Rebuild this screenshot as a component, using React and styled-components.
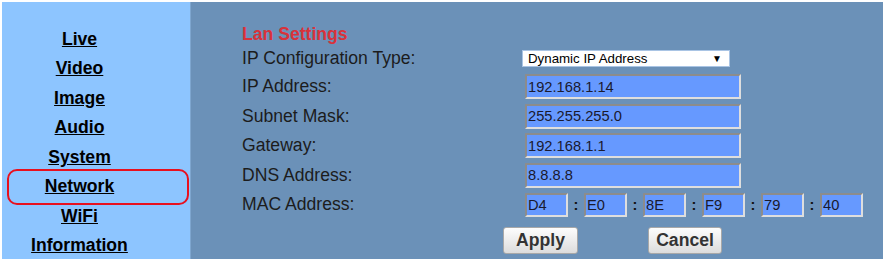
import React from 'react';
import styled, { createGlobalStyle } from 'styled-components';

const GlobalStyle = createGlobalStyle`
  html, body {
    margin: 0;
    padding: 0;
    background: #fff;
  }
  body {
    font-family: "Liberation Sans", Arial, sans-serif;
  }
`;

const Frame = styled.div`
  display: flex;
  margin: 2px 0 0 2px;
  width: 881px;
  height: 257px;
`;

const Sidebar = styled.nav`
  width: 189px;
  box-sizing: border-box;
  padding-top: 23px;
  background: #8dc5ff;
  border-right: 1px solid #7ea6cf;
`;

const NavList = styled.ul`
  list-style: none;
  margin: 0;
  padding: 0;
  width: 155px;
`;

const NavItem = styled.li`
  position: relative;
  height: 29.45px;
  line-height: 29.45px;
  text-align: center;
  font-size: 17.6px;
  font-weight: bold;

  a {
    color: #000;
    text-decoration: underline;
  }

  ${p => p.$marked && `
    &::after {
      content: '';
      position: absolute;
      top: -3px;
      bottom: -3px;
      left: 5px;
      width: 182px;
      box-sizing: border-box;
      border: 2px solid #e8101e;
      border-radius: 10px;
    }
  `}
`;

const Main = styled.main`
  flex: 1;
  padding: 22px 0 0 51px;
  background: #6b91b8;
`;

const Title = styled.h2`
  margin: 0 0 4px;
  height: 20px;
  line-height: 20px;
  font-size: 17.6px;
  font-weight: bold;
  color: #d9323a;
`;

const Row = styled.div`
  display: grid;
  grid-template-columns: 280px auto;
  align-items: center;
  height: ${p => p.$h}px;
  margin-bottom: ${p => p.$gap || 0}px;
`;

const Label = styled.span`
  font-size: 17.6px;
  color: #1c1c1c;
`;

const SelectBox = styled.div`
  display: flex;
  align-items: center;
  justify-content: space-between;
  width: 208px;
  height: 17px;
  box-sizing: border-box;
  padding: 0 7px 0 5px;
  background: #fff;
  border: 1px solid #a9c4e4;
  font-size: 13.3px;
  color: #000;
`;

const Arrow = styled.span`
  font-size: 10px;
  color: #000;
`;

const Field = styled.input`
  box-sizing: border-box;
  width: ${p => p.$w || 216}px;
  height: ${p => p.$hh || 25}px;
  margin: 0;
  padding: 0 0 0 1px;
  background: #6699ff;
  border: 2px solid;
  border-color: #8c8c8c #dedede #dedede #8c8c8c;
  font-family: "Liberation Sans", Arial, sans-serif;
  font-size: 14.7px;
  color: #1a1a2e;
  outline: none;
`;

const Control = styled.div`
  display: flex;
  align-items: center;
  margin-left: 3px;
`;

const Colon = styled.span`
  width: 16px;
  text-align: center;
  font-size: 14.7px;
  font-weight: bold;
  color: #111;
`;

const Buttons = styled.div`
  display: flex;
  gap: 70px;
  margin-top: 7.5px;
  padding-left: 261px;
`;

const Button = styled.button`
  width: ${p => p.$w}px;
  height: 27px;
  padding: 0;
  background: linear-gradient(#fdfdfd, #dcdcdc);
  border: 1px solid #a8a8a8;
  border-radius: 3px;
  font-family: "Liberation Sans", Arial, sans-serif;
  font-size: 17.6px;
  font-weight: bold;
  color: #333;
`;

const navItems = ['Live', 'Video', 'Image', 'Audio', 'System', 'Network', 'WiFi', 'Information'];

const fields = [
  ['IP Address:', '192.168.1.14'],
  ['Subnet Mask:', '255.255.255.0'],
  ['Gateway:', '192.168.1.1'],
  ['DNS Address:', '8.8.8.8'],
];

const mac = ['D4', 'E0', '8E', 'F9', '79', '40'];

export default function App() {
  return (
    <>
      <GlobalStyle />
      <Frame>
        <Sidebar>
          <NavList>
            {navItems.map(n => (
              <NavItem key={n} $marked={n === 'Network'}>
                <a href="#">{n}</a>
              </NavItem>
            ))}
          </NavList>
        </Sidebar>
        <Main>
          <Title>Lan Settings</Title>
          <Row $h={20} $gap={4}>
            <Label>IP Configuration Type:</Label>
            <SelectBox>
              <span>Dynamic IP Address</span>
              <Arrow>▼</Arrow>
            </SelectBox>
          </Row>
          {fields.map(([l, v]) => (
            <Row key={l} $h={29.5}>
              <Label>{l}</Label>
              <Control>
                <Field defaultValue={v} />
              </Control>
            </Row>
          ))}
          <Row $h={29.5}>
            <Label>MAC Address:</Label>
            <Control>
              {mac.map((m, i) => (
                <React.Fragment key={i}>
                  {i > 0 && <Colon>:</Colon>}
                  <Field $w={43} $hh={24} defaultValue={m} />
                </React.Fragment>
              ))}
            </Control>
          </Row>
          <Buttons>
            <Button $w={75}>Apply</Button>
            <Button $w={74}>Cancel</Button>
          </Buttons>
        </Main>
      </Frame>
    </>
  );
}
